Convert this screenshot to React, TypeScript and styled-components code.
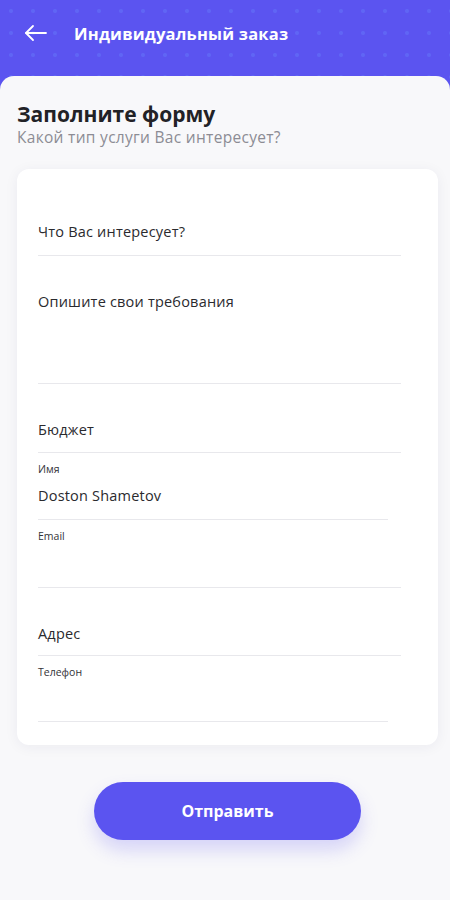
import * as React from "react";
import styled, { createGlobalStyle } from "styled-components";

const purple = "#5b54f0";

const GlobalStyle = createGlobalStyle`
  html, body {
    margin: 0;
    padding: 0;
    background: ${purple};
  }
  body {
    font-family: "Open Sans", "Noto Sans", "Liberation Sans", sans-serif;
    -webkit-font-smoothing: antialiased;
  }
`;

const Screen = styled.div`
  width: 450px;
  height: 900px;
  display: flex;
  flex-direction: column;
  background-color: ${purple};
  background-image: radial-gradient(rgba(105, 140, 255, 0.3) 1.5px, transparent 2.5px);
  background-size: 22px 22px;
  overflow: hidden;
`;

const TopBar = styled.header`
  height: 66px;
  display: flex;
  align-items: center;
  padding: 0 0 10px 24px;
  gap: 26px;
`;

const BackButton = styled.button`
  display: flex;
  padding: 0;
  border: none;
  background: none;
  color: #fff;
`;

const TopTitle = styled.h1`
  margin: 0;
  font-size: 16.5px;
  font-weight: 700;
  color: #fff;
  letter-spacing: 0.2px;
`;

const Sheet = styled.main`
  flex: 1;
  display: flex;
  flex-direction: column;
  background: #f8f8fa;
  border-radius: 14px 14px 0 0;
  padding: 25px 12px 0 17px;
`;

const Heading = styled.h2`
  margin: 0;
  font-size: 21px;
  line-height: 26px;
  font-weight: 700;
  color: #222226;
`;

const SubHeading = styled.p`
  margin: 0;
  font-size: 15.5px;
  line-height: 20px;
  letter-spacing: 0.3px;
  color: #8c8c94;
`;

const Card = styled.section`
  margin-top: 22px;
  background: #fff;
  border-radius: 12px;
  box-shadow: 0 2px 14px rgba(40, 40, 80, 0.06);
  padding: 17px 37px 23px 21px;
  display: flex;
  flex-direction: column;
`;

const Field = styled.div<{ $height: number; $short?: boolean; $labelled?: boolean }>`
  height: ${(p) => p.$height}px;
  margin-right: ${(p) => (p.$short ? 13 : 0)}px;
  border-bottom: 1px solid #e8e8ec;
  display: flex;
  flex-direction: column;
  padding-top: ${(p) => (p.$labelled ? 9 : 36)}px;
  box-sizing: border-box;
`;

const SmallLabel = styled.span`
  font-size: 10.5px;
  line-height: 14px;
  color: #333338;
`;

const Value = styled.span<{ $gap?: number }>`
  margin-top: ${(p) => p.$gap ?? 0}px;
  font-size: 14.5px;
  line-height: 20px;
  letter-spacing: 0.2px;
  min-height: 20px;
  color: #2a2a2e;
`;

const Footer = styled.div`
  flex: 1;
  display: flex;
  justify-content: center;
  align-items: flex-start;
  padding-top: 37px;
  padding-left: 0;
`;

const SubmitButton = styled.button`
  width: 267px;
  height: 58px;
  border: none;
  border-radius: 29px;
  background: ${purple};
  color: #fff;
  font-family: inherit;
  font-size: 16px;
  font-weight: 700;
  box-shadow: 0 10px 18px rgba(91, 84, 240, 0.22);
`;

type FieldDef = {
  height: number;
  text?: string;
  label?: string;
  short?: boolean;
};

const fields: FieldDef[] = [
  { height: 70, text: "Что Вас интересует?" },
  { height: 128, text: "Опишите свои требования" },
  { height: 69, text: "Бюджет" },
  { height: 67, label: "Имя", text: "Doston Shametov", short: true },
  { height: 68, label: "Email" },
  { height: 68, text: "Адрес" },
  { height: 66, label: "Телефон", short: true },
];

function BackArrow() {
  return (
    <svg width="24" height="18" viewBox="0 0 24 18" fill="none" stroke="currentColor" strokeWidth="1.8" strokeLinecap="round" strokeLinejoin="round">
      <path d="M22 9H2" />
      <path d="M9 2L2 9l7 7" />
    </svg>
  );
}

export default function App() {
  return (
    <Screen>
      <GlobalStyle />
      <TopBar>
        <BackButton aria-label="Назад">
          <BackArrow />
        </BackButton>
        <TopTitle>Индивидуальный заказ</TopTitle>
      </TopBar>
      <Sheet>
        <Heading>Заполните форму</Heading>
        <SubHeading>Какой тип услуги Вас интересует?</SubHeading>
        <Card>
          {fields.map((f, i) => (
            <Field key={i} $height={f.height} $short={f.short} $labelled={!!f.label}>
              {f.label && <SmallLabel>{f.label}</SmallLabel>}
              <Value $gap={f.label ? 10 : 0}>{f.text}</Value>
            </Field>
          ))}
        </Card>
        <Footer>
          <SubmitButton>Отправить</SubmitButton>
        </Footer>
      </Sheet>
    </Screen>
  );
}
